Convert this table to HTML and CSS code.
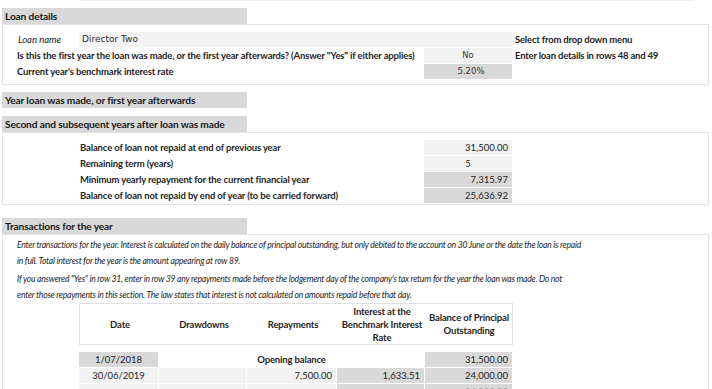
FILE: index.html
```html
<!DOCTYPE html>
<html>
<head>
<meta charset="utf-8">
<link rel="stylesheet" href="styles.css">
</head>
<body>
<div class="sheet">
  <div class="topline"></div>

  <div class="sec-head first">Loan details</div>
  <div class="panel p1">
    <div class="grid1">
      <div class="lbl ital">Loan name</div>
      <div class="cell light name span2">Director Two</div>
      <div class="note">Select from drop down menu</div>

      <div class="lbl bold span2">Is this the first year the loan was made, or the first year afterwards? (Answer "Yes" if either applies)</div>
      <div class="cell light tah center">No</div>
      <div class="note">Enter loan details in rows 48 and 49</div>

      <div class="lbl bold span2">Current year's benchmark interest rate</div>
      <div class="cell dark tah center pct">5.20%</div>
      <div class="note"></div>
    </div>
  </div>

  <div class="sec-head g7">Year loan was made, or first year afterwards</div>
  <div class="sec-head g8">Second and subsequent years after loan was made</div>
  <div class="panel p2">
    <div class="grid2">
      <div class="lbl bold">Balance of loan not repaid at end of previous year</div>
      <div class="cell light num">31,500.00</div>
      <div class="lbl bold">Remaining term (years)</div>
      <div class="cell light center">5</div>
      <div class="lbl bold">Minimum yearly repayment for the current financial year</div>
      <div class="cell dark num">7,315.97</div>
      <div class="lbl bold">Balance of loan not repaid by end of year (to be carried forward)</div>
      <div class="cell dark num">25,636.92</div>
    </div>
  </div>

  <div class="sec-head g13">Transactions for the year</div>
  <div class="panel p3">
    <p class="para">Enter transactions for the year. Interest is calculated on the daily balance of principal outstanding, but only debited to the account on 30 June or the date the loan is repaid<br>in full. Total interest for the year is the amount appearing at row 89.</p>
    <p class="para second">If you answered "Yes" in row 31, enter in row 39 any repayments made before the lodgement day of the company's tax return for the year the loan was made. Do not<br>enter those repayments in this section. The law states that interest is not calculated on amounts repaid before that day.</p>

    <div class="thead">
      <div class="th">Date</div>
      <div class="th">Drawdowns</div>
      <div class="th">Repayments</div>
      <div class="th">Interest at the<br>Benchmark Interest<br>Rate</div>
      <div class="th">Balance of Principal<br>Outstanding</div>
    </div>

    <div class="tbody">
      <div class="cell dark center">1/07/2018</div>
      <div class="open bold">Opening balance</div>
      <div class="cell dark num">31,500.00</div>

      <div class="cell light center">30/06/2019</div>
      <div class="cell light"></div>
      <div class="cell light num">7,500.00</div>
      <div class="cell dark num">1,633.51</div>
      <div class="cell dark num">24,000.00</div>

      <div class="cell light center"></div>
      <div class="cell light"></div>
      <div class="cell light num"></div>
      <div class="cell dark num"></div>
      <div class="cell dark num last">24,000.00</div>
    </div>
  </div>
</div>
</body>
</html>
```

FILE: styles.css
```css
html, body {
  margin: 0;
  padding: 0;
  background: #ffffff;
}

body {
  width: 712px;
  height: 389px;
  overflow: hidden;
  font-family: Lato, "Liberation Sans", sans-serif;
  font-size: 9.5px;
  color: #1e1e1e;
}

.sheet {
  padding-left: 2px;
  width: 707px;
}

.topline {
  margin-left: 78px;
  width: 614px;
  height: 1px;
  background: #f1f1f1;
}

.sec-head {
  width: 242px;
  height: 16px;
  line-height: 16px;
  padding-left: 3px;
  background: #d9d9d9;
  font-weight: 700;
  font-size: 10.2px;
  letter-spacing: -0.15px;
  color: #1a1a1a;
}

.sec-head.first { margin-top: 7px; }
.sec-head.g7 { margin-top: 7px; }
.sec-head.g8 { margin-top: 8px; }
.sec-head.g13 { margin-top: 13px; }

.panel {
  border: 1px solid #e3e3e3;
  background: #ffffff;
}

.p1 { padding: 7px 0 5px 14px; }
.p2 { padding: 7px 0 1px 77px; }
.p3 { padding: 2px 0 0 14px; height: 160px; }

.grid1 {
  display: grid;
  grid-template-columns: 62px 345px 88px 1fr;
  grid-auto-rows: 15px;
  row-gap: 1px;
}

.grid2 {
  display: grid;
  grid-template-columns: 344px 88px;
  grid-auto-rows: 15px;
  row-gap: 1px;
}

.span2 { grid-column: span 2; }

.lbl {
  line-height: 15px;
  white-space: nowrap;
}

.bold { font-weight: 700; letter-spacing: -0.15px; }
.ital { font-style: italic; padding-left: 1px; }

.note {
  font-weight: 700;
  letter-spacing: -0.2px;
  line-height: 15px;
  padding-left: 3px;
  white-space: nowrap;
}

.cell {
  line-height: 15px;
  white-space: nowrap;
  overflow: hidden;
}

.light { background: #f2f2f2; }
.dark { background: #d9d9d9; }

.center { text-align: center; }
.num { text-align: right; padding-right: 4px; }
.last { color: #9a9a9a; }

.tah {
  font-family: "DejaVu Sans", "Liberation Sans", sans-serif;
  font-size: 8.5px;
  color: #333333;
}
.pct { padding-left: 6px; }

.name {
  font-family: "DejaVu Sans", "Liberation Sans", sans-serif;
  font-size: 9px;
  padding-left: 3px;
  color: #333333;
}

.para {
  margin: 0;
  font-style: italic;
  font-size: 8.6px;
  line-height: 16px;
  white-space: nowrap;
  letter-spacing: -0.23px;
}
.para.second { margin-top: 2px; }

.thead {
  margin-left: 62px;
  width: 432px;
  height: 40px;
  border: 1px solid #e0e0e0;
  display: grid;
  grid-template-columns: 80px 88px 90px 88px 86px;
  align-items: center;
}

.th {
  text-align: center;
  font-weight: 700;
  letter-spacing: -0.15px;
  line-height: 13px;
}

.tbody {
  margin-top: 7px;
  margin-left: 62px;
  width: 433px;
  display: grid;
  grid-template-columns: 79px 87px 89px 87px 87px;
  grid-auto-rows: 15px;
  gap: 1px;
}

.open {
  grid-column: span 3;
  text-align: center;
  line-height: 15px;
}
```
